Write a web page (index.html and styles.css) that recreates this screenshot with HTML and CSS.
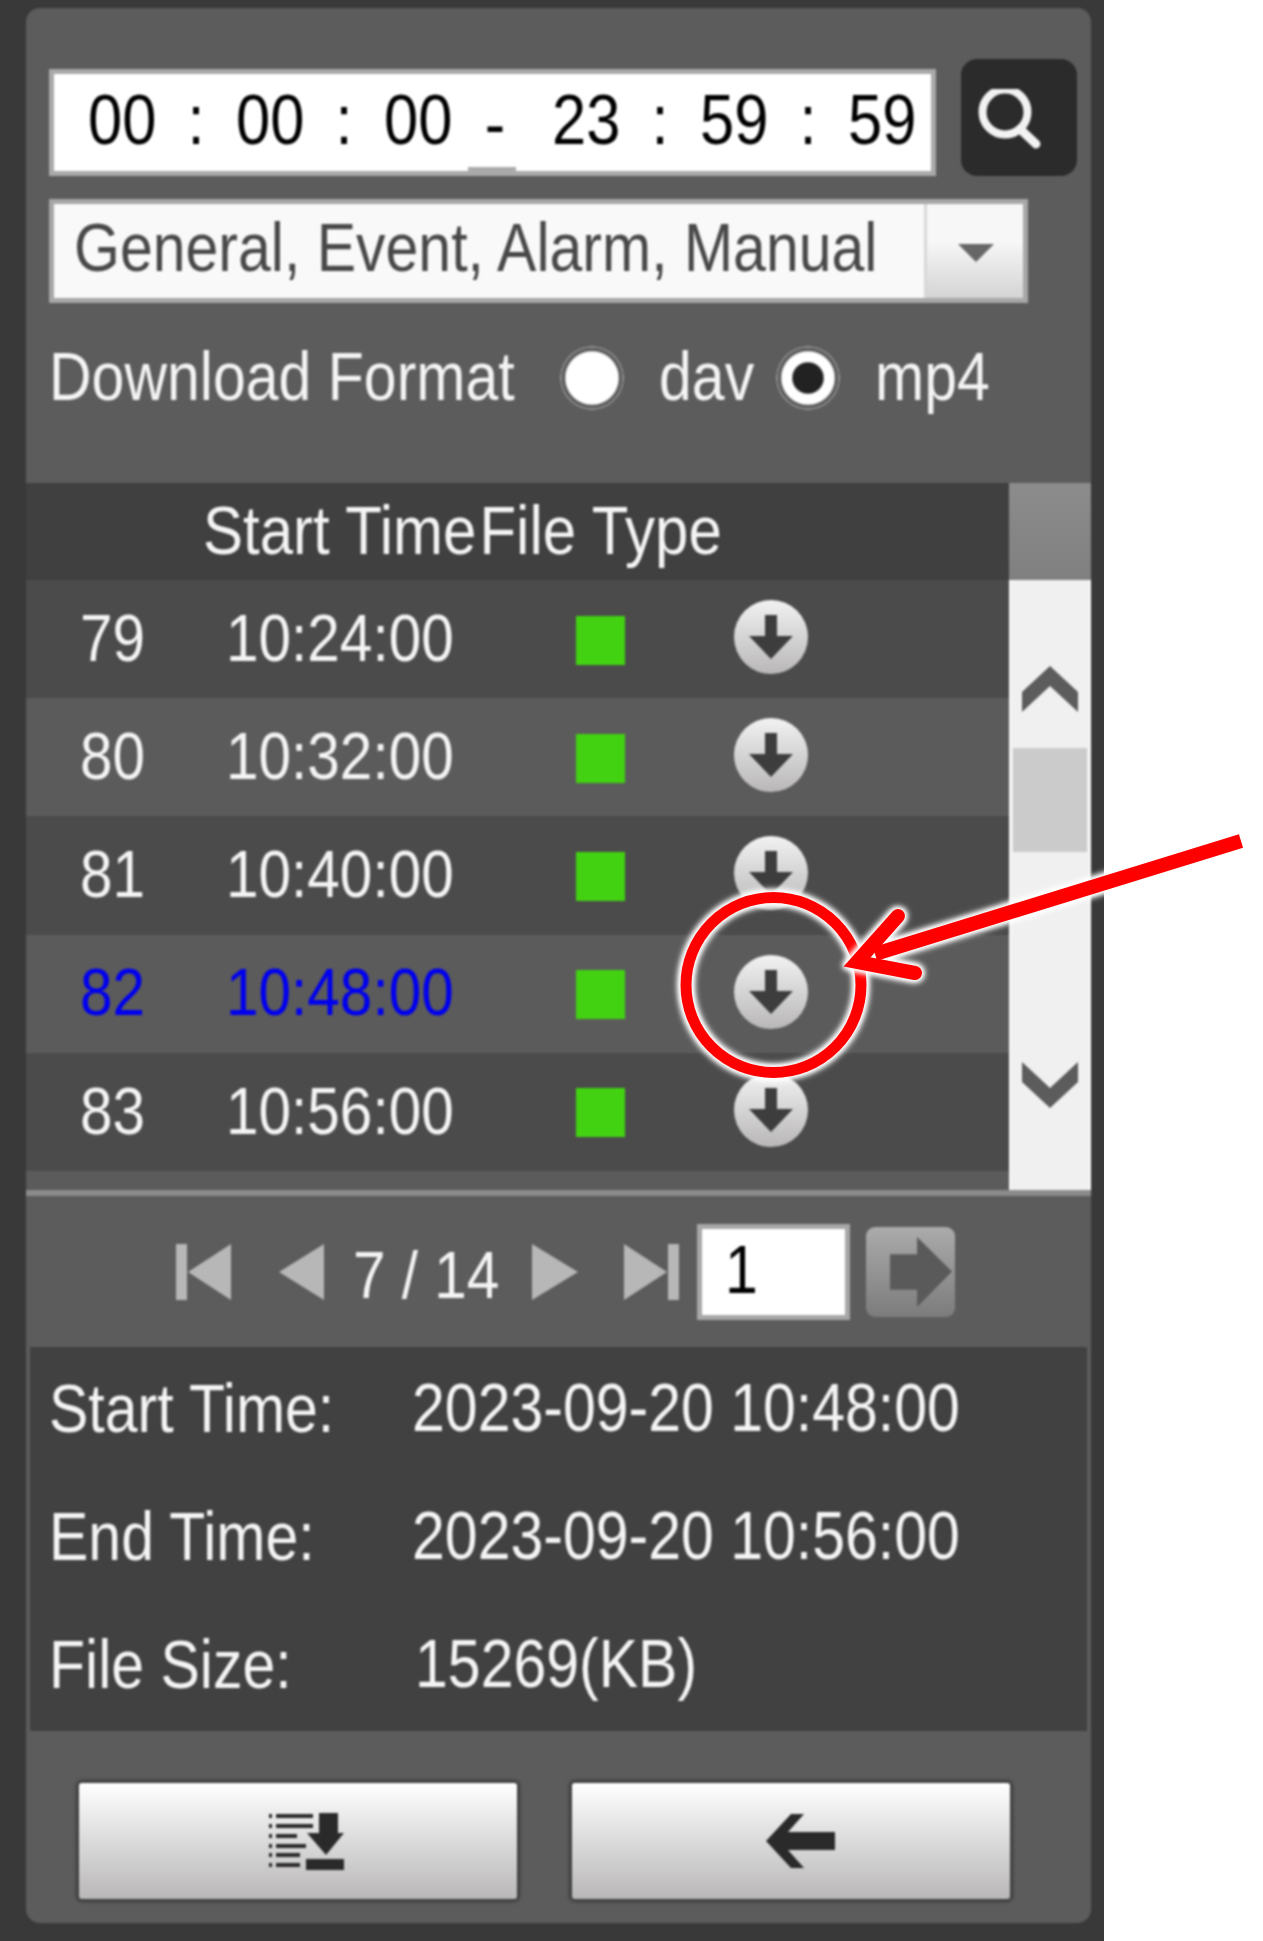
FILE: index.html
```html
<!DOCTYPE html>
<html lang="en">
<head>
    <meta charset="UTF-8">
    <meta name="viewport" content="width=device-width, initial-scale=1.0">
    <title>Playback File List</title>
    <link rel="stylesheet" href="styles.css">
</head>
<body>
    <svg class="defs" width="0" height="0">
        <defs>
            <linearGradient id="ballFill" x1="0" y1="0" x2="0" y2="1">
                <stop offset="0" stop-color="#f2f2f2"/>
                <stop offset="1" stop-color="#b9b7b7"/>
            </linearGradient>
            <symbol id="ball" viewBox="0 0 76 76">
                <circle cx="38" cy="38" r="37" fill="url(#ballFill)"/>
                <path d="M32 16h12v21h16L38 60 16 37h16z" fill="#3d3d3d"/>
            </symbol>
        </defs>
    </svg>

    <div class="shell">
        <div class="panel">
            <section class="filters">
                <div class="time-row">
                    <div class="time-box">
                        <span class="seg"><span class="t">00</span></span><span class="sep"><span class="t">:</span></span>
                        <span class="seg"><span class="t">00</span></span><span class="sep"><span class="t">:</span></span>
                        <span class="seg"><span class="t">00</span></span><span class="dash"><span class="t">-</span></span>
                        <span class="seg"><span class="t">23</span></span><span class="sep"><span class="t">:</span></span>
                        <span class="seg"><span class="t">59</span></span><span class="sep"><span class="t">:</span></span>
                        <span class="seg"><span class="t">59</span></span>
                    </div>
                    <div class="search-btn">
                        <svg width="68" height="62" viewBox="0 0 68 62">
                            <ellipse cx="28" cy="23" rx="22.5" ry="22.5" fill="none" stroke="#f2f2f2" stroke-width="8"/>
                            <path d="M43 40l16 15" stroke="#f2f2f2" stroke-width="9" stroke-linecap="round"/>
                        </svg>
                    </div>
                </div>
                <div class="type-select">
                    <span class="type-text"><span class="t">General, Event, Alarm, Manual</span></span>
                    <span class="type-arrow"></span>
                </div>
                <div class="format-row">
                    <span class="format-label"><span class="t">Download Format</span></span>
                    <span class="radio"></span>
                    <span class="radio-label dav"><span class="t">dav</span></span>
                    <span class="radio checked"></span>
                    <span class="radio-label mp4"><span class="t">mp4</span></span>
                </div>
            </section>

            <section class="list">
                <div class="table">
                    <div class="table-head"><span class="t">Start Time</span><span class="t">File Type</span></div>
                    <div class="row"><span class="t">79</span><span class="t">10:24:00</span><i class="type-dot"></i><svg class="ball"><use href="#ball"/></svg></div>
                    <div class="row"><span class="t">80</span><span class="t">10:32:00</span><i class="type-dot"></i><svg class="ball"><use href="#ball"/></svg></div>
                    <div class="row"><span class="t">81</span><span class="t">10:40:00</span><i class="type-dot"></i><svg class="ball"><use href="#ball"/></svg></div>
                    <div class="row active"><span class="t">82</span><span class="t">10:48:00</span><i class="type-dot"></i><svg class="ball"><use href="#ball"/></svg></div>
                    <div class="row"><span class="t">83</span><span class="t">10:56:00</span><i class="type-dot"></i><svg class="ball"><use href="#ball"/></svg></div>
                    <div class="row"><span></span><span></span><span></span><svg class="ball"><use href="#ball"/></svg></div>
                </div>
                <div class="scroll">
                    <div class="scroll-head"></div>
                    <div class="scroll-track">
                        <svg class="chev up" width="56" height="46" viewBox="0 0 56 46"><path d="M0 26L28 0l28 26v20L28 20 0 46z" fill="#5c5c5c"/></svg>
                        <div class="thumb"></div>
                        <svg class="chev down" width="56" height="46" viewBox="0 0 56 46"><path d="M0 0l28 26L56 0v20L28 46 0 20z" fill="#5c5c5c"/></svg>
                    </div>
                </div>
            </section>

            <section class="pager">
                <svg class="pg first" width="55" height="56" viewBox="0 0 55 56"><path d="M0 0h11v56H0zM55 0v56L12 28z" fill="#b7b7b7"/></svg>
                <svg class="pg prev" width="45" height="56" viewBox="0 0 45 56"><path d="M45 0v56L0 28z" fill="#b7b7b7"/></svg>
                <span class="page-num"><span class="t">7 / 14</span></span>
                <svg class="pg next" width="46" height="56" viewBox="0 0 46 56"><path d="M0 0v56l46-28z" fill="#b7b7b7"/></svg>
                <svg class="pg last" width="55" height="56" viewBox="0 0 55 56"><path d="M44 0h11v56H44zM0 0v56l43-28z" fill="#b7b7b7"/></svg>
                <div class="page-input"><span class="t">1</span></div>
                <div class="go-btn">
                    <svg width="62" height="70" viewBox="0 0 55 65" preserveAspectRatio="none"><path d="M0 16h24V0l31 32-31 33V49H0z" fill="#5a5a5a"/></svg>
                </div>
            </section>

            <section class="info">
                <div class="info-row"><span class="info-label"><span class="t">Start Time:</span></span><span class="t">2023-09-20 10:48:00</span></div>
                <div class="info-row"><span class="info-label"><span class="t">End Time:</span></span><span class="t">2023-09-20 10:56:00</span></div>
                <div class="info-row"><span class="info-label"><span class="t">File Size:</span></span><span class="t size">15269(KB)</span></div>
            </section>

            <section class="actions">
                <div class="action-btn list-btn">
                    <svg width="75" height="57" viewBox="0 0 75 57" fill="#2a2a2a">
                        <path d="M0 1h3v4H0zM0 11h3v4H0zM0 21h3v4H0zM0 31h3v4H0zM0 40h3v4H0zM0 50h3v4H0z"/>
                        <path d="M7 1h37v4H7zM7 11h37v4H7zM7 21h21v4H7zM7 31h30v4H7zM7 40h24v4H7zM7 50h24v4H7z"/>
                        <path d="M50 0h19v20h6L57 42 38 20h12zM37 46h38v11H37z"/>
                    </svg>
                </div>
                <div class="action-btn back-btn">
                    <svg width="69" height="54" viewBox="0 0 69 54"><path d="M0 27L25 0h13L22 18h47v18H22l16 18H25z" fill="#2a2a2a"/></svg>
                </div>
            </section>
        </div>
    </div>

    <!-- red callout over the download button -->
    <svg class="callout" width="1263" height="1941" viewBox="0 0 1263 1941">
        <ellipse class="glow" cx="773.5" cy="985" rx="87.5" ry="87.5" fill="none" stroke="#f00" stroke-width="11"/>
        <g class="glow" fill="none" stroke="#f00" stroke-width="14">
            <path d="M1241 841L875 954"/>
            <path d="M898 916L857 962l58 11" stroke-linecap="round"/>
        </g>
    </svg>
</body>
</html>
```

FILE: styles.css
```css
* {
    box-sizing: border-box;
}
body {
    margin: 0;
    background-color: #fff;
    font-family: "Liberation Sans", Arial, sans-serif;
    font-size: 59px;
    color: #f4f4f4;
}
.defs {
    position: absolute;
}
.shell {
    width: 1104px;
    height: 1941px;
    padding: 8px 13px 0 26px;
    background-color: #393939;
}
.panel {
    width: 1065px;
    height: 1915px;
    background-color: #5c5c5c;
    border-radius: 14px;
    overflow: hidden;
    filter: blur(0.8px);
}

/* the source picture is stretched, so text is a bit taller than wide */
.t {
    display: inline-block;
    line-height: 1;
    white-space: pre;
    transform: translateY(-1px) scaleY(1.15);
}

.filters {
    height: 475px;
    padding: 51px 0 0 23px;
}
.time-row {
    display: flex;
    align-items: flex-end;
    gap: 25px;
}
.time-box {
    position: relative;
    display: flex;
    align-items: center;
    width: 887px;
    height: 107px;
    padding: 0 0 5px 34px;
    background-color: #fff;
    border: 5px solid #a9a9a9;
    color: #000;
    font-size: 61.5px;
}
.time-box::after {
    content: "";
    position: absolute;
    left: 414px;
    bottom: -1px;
    width: 48px;
    height: 5px;
    background-color: #aaa;
}
.seg {
    width: 68px;
}
.sep {
    width: 80px;
    text-align: center;
}
.dash {
    width: 100px;
    padding: 8px 14px 0 0;
    text-align: center;
}
.search-btn {
    display: flex;
    align-items: center;
    justify-content: center;
    width: 116px;
    height: 117px;
    padding: 5px 16px 0 0;
    background-color: #2b2b2b;
    border-radius: 16px;
}
.type-select {
    display: flex;
    width: 979px;
    height: 104px;
    margin-top: 23px;
    background-color: #f9f9f9;
    border: 5px solid #a7a7a7;
    color: #484848;
}
.type-text {
    display: flex;
    align-items: center;
    flex: 1;
    padding: 0 0 3px 20px;
}
.type-arrow {
    position: relative;
    width: 99px;
    background: linear-gradient(#f7f7f7 40%, #d4d4d4);
    border-left: 3px solid #d8d8d8;
}
.type-arrow::after {
    content: "";
    position: absolute;
    left: 31px;
    top: 40px;
    border-left: 18px solid transparent;
    border-right: 18px solid transparent;
    border-top: 18px solid #666;
}
.format-row {
    display: flex;
    align-items: center;
    height: 64px;
    margin-top: 43px;
}
.format-label {
    width: 511px;
}
.radio {
    width: 64px;
    height: 64px;
    background: radial-gradient(circle, #fff 26px, #5c5c5c 27.5px, #5c5c5c 30px, #8d8d8d 30.5px, #8d8d8d 31.5px, transparent 32px);
}
.radio.checked {
    background: radial-gradient(circle, #222 15px, #fff 16.5px, #fff 26px, #5c5c5c 27.5px, #5c5c5c 30px, #8d8d8d 30.5px, #8d8d8d 31.5px, transparent 32px);
}
.radio-label.dav {
    width: 152px;
    padding-left: 35px;
}
.radio-label.mp4 {
    padding-left: 35px;
}

.list {
    display: flex;
    height: 713px;
    border-bottom: 6px solid #8b8b8b;
}
.table {
    width: 983px;
    overflow: hidden;
}
.table-head {
    display: flex;
    align-items: center;
    gap: 3px;
    height: 97px;
    padding-left: 177px;
    background-color: #404040;
    font-size: 60px;
}
.row {
    display: grid;
    grid-template-columns: 146px 350px 157px 76px;
    align-items: center;
    height: 118.2px;
    padding-left: 54px;
    background-color: #4b4b4b;
    font-size: 58.5px;
}
.row:nth-child(odd) {
    background-color: #5b5b5b;
}
.row.active {
    color: #0000f0;
}
.type-dot {
    display: block;
    width: 49px;
    height: 49px;
    margin-top: 2px;
    background-color: #42d212;
}
.ball {
    display: block;
    width: 76px;
    height: 76px;
    margin-bottom: 4px;
}
.scroll {
    width: 82px;
    height: 707px;
}
.scroll-head {
    height: 97px;
    background: linear-gradient(#8c8c8c, #808080);
}
.scroll-track {
    position: relative;
    display: flex;
    flex-direction: column;
    align-items: center;
    height: 610px;
    padding-top: 86px;
    background-color: #f0f0f0;
    border-left: 2px solid #fafafa;
    border-right: 2px solid #fafafa;
}
.thumb {
    width: 74px;
    height: 104px;
    margin-top: 36px;
    background-color: #cbcbcb;
}
.chev.down {
    margin-top: 210px;
}

.pager {
    display: flex;
    align-items: center;
    height: 151px;
    padding: 0 0 0 150px;
}
.pg {
    flex: none;
}
.prev {
    margin-left: 48px;
}
.page-num {
    width: 208px;
    padding: 8px 0 0 29px;
    font-size: 58.5px;
}
.last {
    margin-left: 46px;
}
.page-input {
    display: flex;
    align-items: center;
    width: 153px;
    height: 96px;
    margin-left: 18px;
    padding: 0 0 1px 23px;
    background-color: #fff;
    border: 5px solid #a7a7a7;
    color: #000;
}
.go-btn {
    display: flex;
    align-items: center;
    justify-content: flex-end;
    width: 89px;
    height: 90px;
    margin-left: 16px;
    padding-right: 3px;
    background: linear-gradient(#ababab, #7c7c7c);
    border-radius: 9px;
}

.info {
    width: 1057px;
    height: 384px;
    margin-left: 4px;
    background-color: #414141;
}
.info-row {
    display: flex;
    align-items: center;
    height: 128px;
    padding: 0 0 3px 19px;
}
.info-label {
    width: 363px;
}
.size {
    margin-left: 3px;
}

.actions {
    display: flex;
    gap: 55px;
    padding: 52px 0 0 53px;
}
.action-btn {
    display: flex;
    align-items: center;
    justify-content: center;
    width: 438px;
    height: 116px;
    background: linear-gradient(#fff, #b9b7b7);
    border-radius: 3px;
    box-shadow: 0 0 3px 3px #3e3e3e;
}
.list-btn {
    padding-left: 16px;
}
.back-btn {
    padding-left: 18px;
}

.callout {
    position: absolute;
    left: 0;
    top: 0;
}
.glow {
    filter: drop-shadow(0 0 3px #fff) drop-shadow(0 0 2px #fff) drop-shadow(0 0 2px #fff);
}
```
